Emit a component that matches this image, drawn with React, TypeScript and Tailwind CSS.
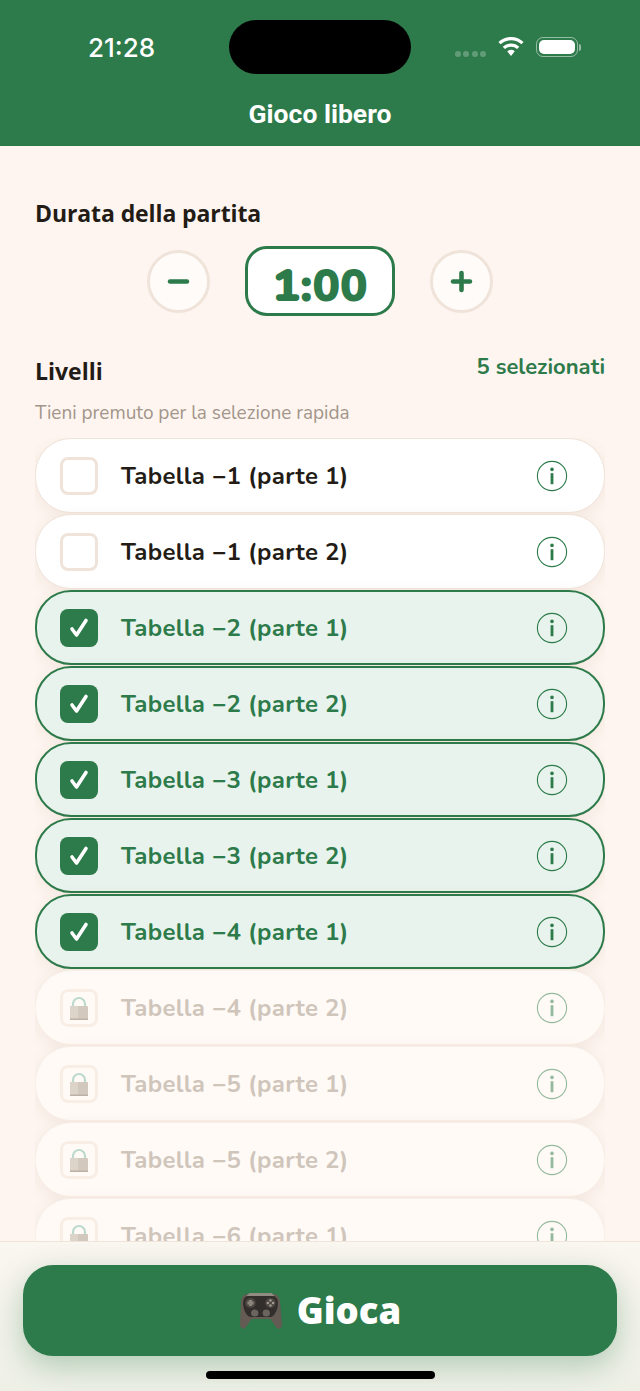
import { Minus, Plus } from "lucide-react";

const levels = [
  { name: "Tabella −1 (parte 1)", state: "open" },
  { name: "Tabella −1 (parte 2)", state: "open" },
  { name: "Tabella −2 (parte 1)", state: "selected" },
  { name: "Tabella −2 (parte 2)", state: "selected" },
  { name: "Tabella −3 (parte 1)", state: "selected" },
  { name: "Tabella −3 (parte 2)", state: "selected" },
  { name: "Tabella −4 (parte 1)", state: "selected" },
  { name: "Tabella −4 (parte 2)", state: "locked" },
  { name: "Tabella −5 (parte 1)", state: "locked" },
  { name: "Tabella −5 (parte 2)", state: "locked" },
  { name: "Tabella −6 (parte 1)", state: "locked" },
];

const InfoIcon = ({ faded }: { faded?: boolean }) => (
  <svg width="32" height="32" viewBox="0 0 32 32" className={faded ? "opacity-50" : ""}>
    <circle cx="16" cy="16" r="14.6" fill="none" stroke="#2d7a4a" strokeWidth="1.1" />
    <circle cx="16" cy="9.4" r="1.8" fill="#2d7a4a" />
    <rect x="14.6" y="13.2" width="2.8" height="11" fill="#2d7a4a" />
  </svg>
);

const CheckMark = () => (
  <svg width="38" height="38" viewBox="0 0 38 38">
    <path d="M12 20L16.500 26L26 11.500" fill="none" stroke="white" strokeWidth="3.600" strokeLinecap="round" strokeLinejoin="round" />
  </svg>
);

const Padlock = () => (
  <svg width="20" height="24" viewBox="0 0 20 24">
    <path d="M4 11V8a6 6 0 0 1 12 0v3" fill="none" stroke="#bcd9cd" strokeWidth="2.2" />
    <rect x="1" y="10" width="18" height="14" rx="1" fill="#d3c8bd" />
    <rect x="1" y="10" width="8" height="14" fill="#dcd3c9" />
    <rect x="1" y="22.500" width="18" height="1.500" fill="#bdb1a6" />
  </svg>
);

const Gamepad = () => (
  <svg width="43" height="38" viewBox="0 0 41 38" preserveAspectRatio="none">
    <path d="M8 2h25c3 0 5 2 6 7l2 23c.2 4-3 6-5 4l-6-9H12l-6 9c-2 2-5.200 0-5-4L2 9c1-5 3-7 6-7z" fill="#645b54" />
    <path d="M9 4h23c3 0 4.500 2 5 5 .7 6-2 15-7 16H11C6 24 3.300 15 4 9c.5-3 2-5 5-5z" fill="#322e2b" />
    <path d="M10 1h21l3 3H7z" fill="#908c82" />
    <circle cx="11" cy="11" r="5" fill="#4d4742" />
    <circle cx="30" cy="11" r="5" fill="#4d4742" />
    <circle cx="15" cy="21" r="3.500" fill="#6b655f" />
    <circle cx="26" cy="21" r="3.500" fill="#6b655f" />
    <rect x="9.500" y="8" width="3" height="6" fill="#8a847d" />
    <rect x="8" y="9.500" width="6" height="3" fill="#8a847d" />
    <circle cx="30" cy="8.500" r="1.200" fill="#a09a92" />
    <circle cx="30" cy="13.500" r="1.200" fill="#a09a92" />
    <circle cx="27.500" cy="11" r="1.200" fill="#a09a92" />
    <circle cx="32.500" cy="11" r="1.200" fill="#a09a92" />
  </svg>
);

const LevelRow = ({ name, state }: { name: string; state: string }) => {
  const selected = state === "selected";
  const locked = state === "locked";
  return (
    <div
      className={`h-[75px] shrink-0 flex items-center rounded-[36px] shadow-[0_4px_16px_rgba(120,80,40,0.08)] pl-[24px] pr-[36px] ${
        selected
          ? "bg-[#e7f3ec] border-2 border-[#2d7a4a]"
          : locked
            ? "bg-[#fffaf6] border border-[#f8efe8]"
            : "bg-white border border-[#f0e4da]"
      }`}
    >
      <div
        className={`w-[38px] h-[38px] shrink-0 rounded-[8px] flex items-center justify-center ${
          selected ? "bg-[#2d7a4a] -ml-[1px]" : locked ? "border-[3px] border-[#f8eee6]" : "border-[3px] border-[#f0e4da]"
        }`}
      >
        {selected && <CheckMark />}
        {locked && <Padlock />}
      </div>
      <span
        className={`ml-[23px] flex-1 text-[24px] font-bold font-['Nunito','Lato',sans-serif] tracking-[0.3px] ${
          selected ? "text-[#2d7a4a]" : locked ? "text-[#cfc5bb]" : "text-[#231c16]"
        }`}
      >
        {name}
      </span>
      <div className={selected ? "-mr-[1px]" : ""}>
        <InfoIcon faded={locked} />
      </div>
    </div>
  );
};

export default function App() {
  return (
    <div className="relative w-[640px] h-[1391px] flex flex-col overflow-hidden bg-[#fef5f0] font-['Nunito','Lato',sans-serif]">
      {/* header */}
      <div className="h-[146px] shrink-0 bg-[#2d7a4a] flex flex-col text-white">
        <div className="h-[94px] flex items-center justify-between pl-[88px] pr-[59px]">
          <span className="text-[26px] font-medium font-['Inter',sans-serif]">21:28</span>
          <div className="flex items-center gap-[11px]">
            <div className="flex gap-[2.500px] mt-[13px] opacity-25">
              <span className="w-[6px] h-[6px] rounded-full bg-white" />
              <span className="w-[6px] h-[6px] rounded-full bg-white" />
              <span className="w-[6px] h-[6px] rounded-full bg-white" />
              <span className="w-[6px] h-[6px] rounded-full bg-white" />
            </div>
            <svg width="28" height="21" viewBox="0 0 28 22" className="-mt-[1px]">
              <path d="M14 21l-4-5c2.500-2 5.500-2 8 0z" fill="white" />
              <path d="M6.500 12.500C10.500 8.500 17.500 8.500 21.500 12.500M2 7.500C8.500 1 19.500 1 26 7.500" fill="none" stroke="white" strokeWidth="3.400" />
            </svg>
            <div className="flex items-center gap-[1px]">
              <div className="w-[42px] h-[20px] rounded-[7px] border border-white/50 p-[2px]">
                <div className="w-full h-full rounded-[5px] bg-white" />
              </div>
              <div className="w-[2px] h-[7px] rounded-r-full bg-white/50" />
            </div>
          </div>
        </div>
        <div className="mt-[5px] text-center text-[26.500px] font-bold leading-[30px] font-['Roboto',sans-serif]">Gioco libero</div>
      </div>
      <div className="absolute left-[229px] top-[20px] w-[182px] h-[54px] rounded-[27px] bg-black" />

      {/* content */}
      <div className="flex-1 min-h-0 flex flex-col px-[35px]">
        <h2 className="mt-[52px] text-[23px] leading-[30px] font-bold text-[#231c16] font-['Open_Sans',sans-serif] tracking-[-0.1px]">Durata della partita</h2>
        <div className="mt-[18px] flex items-center justify-center gap-[35px]">
          <button className="w-[63px] h-[63px] rounded-full bg-white/60 border-[3px] border-[#f0e4da] flex items-center justify-center">
            <Minus size={29} color="#2d7a4a" strokeWidth={3.8} />
          </button>
          <div className="w-[150px] h-[70px] rounded-[22px] bg-white border-[3px] border-[#2d7a4a] flex items-center justify-center pt-[8px] text-[46px] font-black text-[#2d7a4a] font-['Nunito','Lato',sans-serif]">
            1:00
          </div>
          <button className="w-[63px] h-[63px] rounded-full bg-white/60 border-[3px] border-[#f0e4da] flex items-center justify-center">
            <Plus size={29} color="#2d7a4a" strokeWidth={3.8} />
          </button>
        </div>
        <div className="mt-[36px] flex justify-between items-start">
          <h2 className="mt-[4px] text-[23px] leading-[30px] font-bold text-[#231c16] font-['Open_Sans',sans-serif]">Livelli</h2>
          <span className="text-[22px] leading-[30px] font-bold text-[#2d7a4a]">5 selezionati</span>
        </div>
        <p className="mt-[15px] text-[19px] leading-[24px] text-[#a3958a]">Tieni premuto per la selezione rapida</p>
        {/* list */}
        <div className="mt-[13px] flex-1 min-h-0 overflow-hidden flex flex-col gap-[1px]">
          {levels.map((level) => (
            <LevelRow key={level.name} name={level.name} state={level.state} />
          ))}
        </div>
      </div>

      {/* footer */}
      <div className="h-[150px] shrink-0 border-t border-[#f0e4da] px-[23px] pt-[23px] bg-gradient-to-b from-[#faf6f0] to-[#eef0e6]">
        <button className="w-full h-[91px] rounded-[30px] bg-[#2d7a4a] shadow-[0_10px_30px_rgba(45,122,74,0.32)] flex items-center justify-center gap-[15px] text-white text-[36.500px] font-extrabold font-['Open_Sans',sans-serif]">
          <Gamepad />
          Gioca
        </button>
      </div>
      <div className="absolute left-[206px] bottom-[12px] w-[229px] h-[8px] rounded-full bg-black" />
    </div>
  );
}
